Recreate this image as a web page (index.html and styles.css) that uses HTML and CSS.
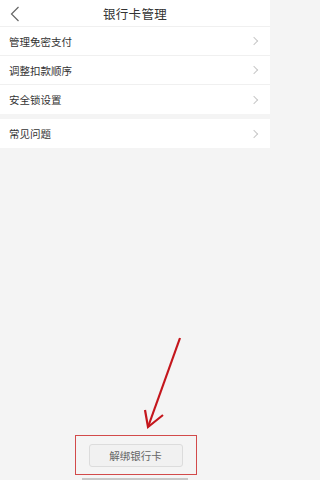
FILE: index.html
```html
<!DOCTYPE html>
<html lang="zh-CN">
<head>
<meta charset="utf-8">
<title>银行卡管理</title>
<link rel="stylesheet" href="styles.css">
</head>
<body>
<div class="page">
  <header class="header">
    <span class="back">
      <svg width="10" height="16" viewBox="0 0 10 16"><path d="M8.5 1 L1.5 8 L8.5 15" fill="none" stroke="#666" stroke-width="1.2"/></svg>
    </span>
    <h1 class="title">银行卡管理</h1>
  </header>
  <section class="group">
    <div class="row"><span>管理免密支付</span><span class="chev"></span></div>
    <div class="row"><span>调整扣款顺序</span><span class="chev"></span></div>
    <div class="row last"><span>安全锁设置</span><span class="chev"></span></div>
  </section>
  <section class="group gap">
    <div class="row last"><span>常见问题</span><span class="chev"></span></div>
  </section>
  <footer class="footer">
    <div class="highlight">
      <button class="unbind">解绑银行卡</button>
    </div>
    <div class="bar"></div>
  </footer>
  <svg class="arrow" width="270" height="480" viewBox="0 0 270 480">
    <path d="M180 338 L148 427" stroke="#c4161c" stroke-width="2.2" fill="none"/>
    <path d="M145 410 L148 427 L163 415" stroke="#c4161c" stroke-width="2.2" fill="none" stroke-linejoin="miter"/>
  </svg>
</div>
</body>
</html>
```
FILE: styles.css
```css
html, body {
  margin: 0;
  padding: 0;
}
body {
  font-family: "Noto Sans CJK SC", "Noto Sans", sans-serif;
  background: #f4f4f4;
}
.page {
  position: relative;
  width: 270px;
  height: 480px;
  display: flex;
  flex-direction: column;
  background: #f4f4f4;
  overflow: hidden;
}
.header {
  height: 26px;
  background: #fff;
  border-bottom: 1px solid #f0f0f0;
  display: flex;
  align-items: center;
  justify-content: center;
  position: relative;
}
.back {
  position: absolute;
  left: 10px;
  top: 6px;
  display: flex;
}
.title {
  margin: 0;
  font-size: 12.5px;
  font-weight: normal;
  color: #333;
  letter-spacing: 0.3px;
}
.group {
  background: #fff;
  display: flex;
  flex-direction: column;
}
.group.gap {
  margin-top: 5px;
}
.row {
  height: 28px;
  padding: 0 9px;
  display: flex;
  align-items: center;
  justify-content: space-between;
  border-bottom: 1px solid #f0f0f0;
  font-size: 10.5px;
  color: #333;
}
.row.last {
  height: 29px;
  border-bottom: none;
}
.chev {
  width: 5px;
  height: 5px;
  border-top: 1px solid #c8c8c8;
  border-right: 1px solid #c8c8c8;
  transform: rotate(45deg);
  margin-right: 4px;
}
.footer {
  margin-top: auto;
  display: flex;
  flex-direction: column;
  align-items: center;
}
.highlight {
  width: 120px;
  height: 38px;
  border: 1.5px solid #d24a4a;
  display: flex;
  align-items: center;
  justify-content: center;
  margin-left: 1px;
}
.unbind {
  width: 94px;
  height: 23px;
  border: 1px solid #dcdcdc;
  border-radius: 3px;
  background: #f1f1f1;
  color: #666;
  font-family: "Noto Sans CJK SC", "Noto Sans", sans-serif;
  font-size: 10.5px;
  padding: 0;
}
.bar {
  margin-top: 3px;
  width: 106px;
  height: 2px;
  background: #c8c8c8;
}
.arrow {
  position: absolute;
  left: 0;
  top: 0;
  pointer-events: none;
}
```
